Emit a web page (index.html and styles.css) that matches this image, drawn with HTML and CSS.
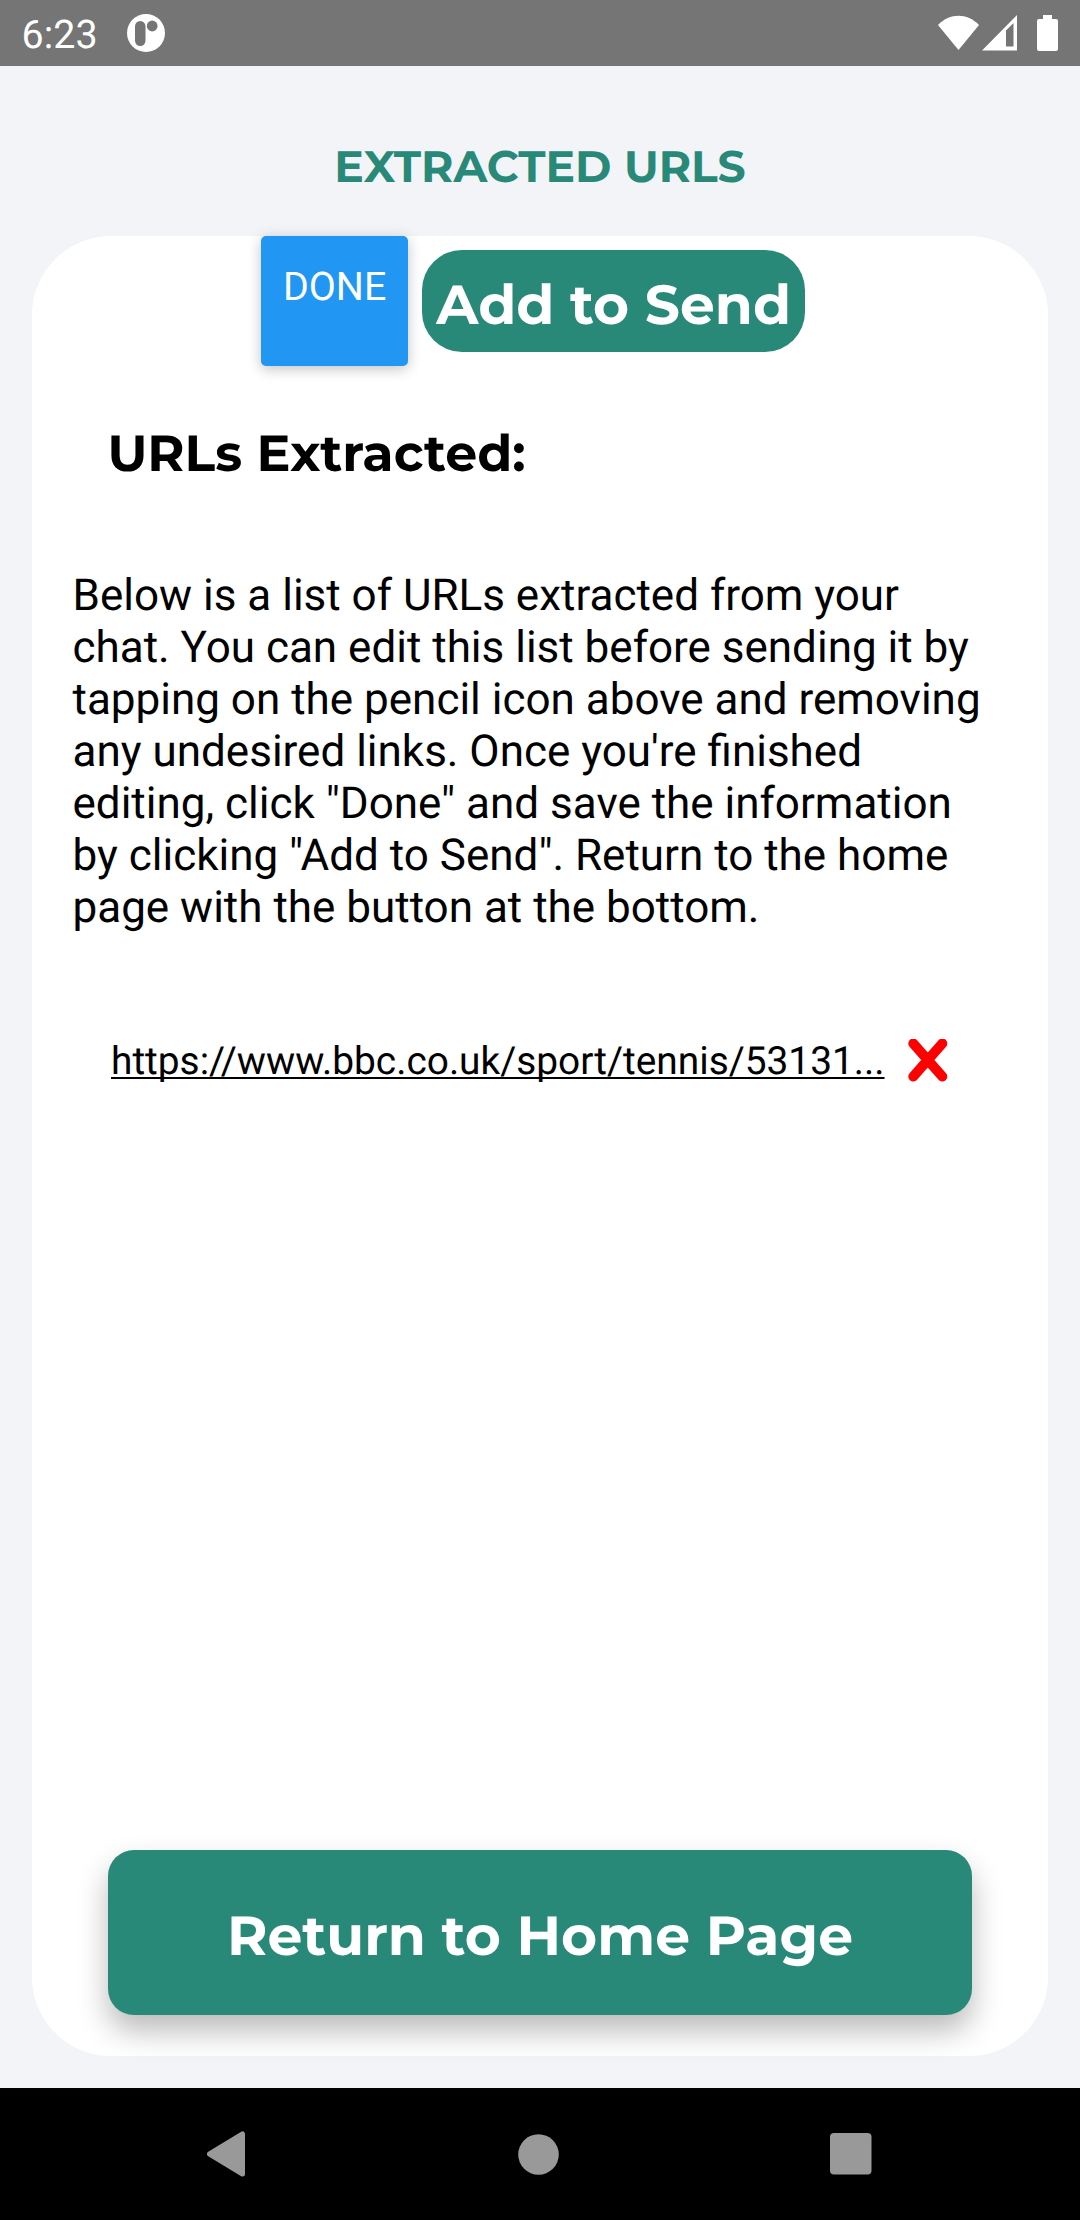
FILE: index.html
```html
<!DOCTYPE html>
<html lang="en">
<head>
<meta charset="utf-8">
<title>Extracted URLs</title>
<link rel="stylesheet" href="styles.css">
</head>
<body>
<div class="screen">
  <div class="status-bar">
    <span class="clock">6:23</span>
    <svg class="notification" width="38" height="38" viewBox="0 0 38 38">
      <circle cx="19" cy="19" r="19" fill="#fff"/>
      <rect x="8" y="7" width="10.5" height="25" rx="5.2" fill="#757575"/>
      <circle cx="25.2" cy="12" r="5.4" fill="#757575"/>
    </svg>
    <svg class="indicators" width="121" height="38" viewBox="0 0 121 38" fill="#fff">
      <path d="M0 10C12 -2.300 29 -2.300 41 10L20.500 35Z"/>
      <path fill-rule="evenodd" d="M44 35.500L79 0V35.500ZM68 15.500V31.500H75.500V8Z"/>
      <path d="M105 0H114V4H118a2 2 0 0 1 2 2V34a2 2 0 0 1-2 2H101a2 2 0 0 1-2-2V6a2 2 0 0 1 2-2H105Z"/>
    </svg>
  </div>
  <main class="page">
    <h1 class="title">EXTRACTED URLS</h1>
    <section class="card">
      <div class="actions">
        <button class="done">DONE</button>
        <button class="add">Add to Send</button>
      </div>
      <h2 class="heading">URLs Extracted:</h2>
      <p class="intro">Below is a list of URLs extracted from your<br>chat. You can edit this list before sending it by<br>tapping on the pencil icon above and removing<br>any undesired links. Once you're finished<br>editing, click "Done" and save the information<br>by clicking "Add to Send". Return to the home<br>page with the button at the bottom.</p>
      <div class="url-row">
        <a class="url">https://www.bbc.co.uk/sport/tennis/53131...</a>
        <svg class="remove" width="40" height="44" viewBox="0 0 40 44">
          <path d="M5.300 4.500L34.300 37.500M34.300 4.500L5.300 37.500" stroke="#f00" stroke-width="10" stroke-linecap="round"/>
        </svg>
      </div>
      <button class="return">Return to Home Page</button>
    </section>
  </main>
  <nav class="nav-bar">
    <svg width="40" height="46" viewBox="0 0 40 46"><path d="M3.500 23L36.500 3V43Z" fill="#999" stroke="#999" stroke-width="5" stroke-linejoin="round"/></svg>
    <svg width="41" height="41" viewBox="0 0 41 41"><circle cx="20.500" cy="20.500" r="20.300" fill="#999"/></svg>
    <svg width="42" height="42" viewBox="0 0 42 42"><rect width="41.500" height="41.500" rx="4" fill="#999"/></svg>
  </nav>
</div>
</body>
</html>
```
FILE: styles.css
```css
* { box-sizing: border-box; }

body {
  margin: 0;
  background: #f2f4f8;
  font-family: Roboto, sans-serif;
  color: #000;
  text-rendering: geometricPrecision;
}

h1, h2, p { margin: 0; }

button {
  border: 0;
  color: #fff;
  text-align: left;
  white-space: nowrap;
  text-rendering: inherit;
}

svg { display: block; flex: none; }

.screen {
  display: flex;
  flex-direction: column;
  width: 1080px;
  height: 2220px;
}

.status-bar {
  display: flex;
  height: 66px;
  padding: 0 20px 0 21.600px;
  background: #757575;
  color: #fff;
}

.clock {
  width: 105.700px;
  padding-top: 12px;
  font-size: 39.400px;
  line-height: 46px;
}

.notification { margin-top: 14.300px; }

.indicators { margin: 15px 1px 0 auto; }

.page {
  display: flex;
  flex: 1;
  flex-direction: column;
  padding: 0 32px 32px;
}

.title {
  height: 170px;
  padding-top: 74px;
  color: #298978;
  font: 700 44.100px/54px Montserrat, Inter, sans-serif;
  text-align: center;
}

.card {
  display: flex;
  flex: 1;
  flex-direction: column;
  border-radius: 79px;
  background: #fff;
}

.actions {
  display: flex;
  gap: 14px;
  height: 130px;
  margin-left: 229px;
}

.done {
  display: flex;
  width: 147px;
  padding: 27.500px 0 0 21.900px;
  border-radius: 5px;
  background: #2196f3;
  box-shadow: 0 3px 14px rgba(0, 0, 0, 0.240);
  font: 400 39.400px/46px Roboto, sans-serif;
}

.add {
  display: flex;
  width: 383px;
  height: 102px;
  margin-top: 14px;
  padding: 20.800px 0 0 14.300px;
  border-radius: 40px;
  background: #298978;
  font: 700 55.100px/67px Montserrat, Inter, sans-serif;
}

.heading {
  margin: 55.800px 0 0 75.400px;
  font: 700 50.700px/62px Montserrat, Inter, sans-serif;
}

.intro {
  margin: 85.200px 0 0 40.500px;
  font-size: 44px;
  line-height: 52px;
  white-space: nowrap;
}

.url-row {
  display: flex;
  gap: 22px;
  margin: 106px 0 0 79px;
}

.url {
  width: 775px;
  font-size: 38.850px;
  line-height: 46px;
  white-space: nowrap;
  text-decoration: underline;
  text-decoration-thickness: 2px;
  text-underline-offset: 3px;
  text-decoration-skip-ink: none;
}

.return {
  width: 864px;
  height: 165px;
  margin: auto auto 41px;
  padding: 5px 0 0;
  border-radius: 26px;
  background: #298978;
  box-shadow: 0 16px 30px rgba(0, 0, 0, 0.270);
  font: 700 55.200px/67px Montserrat, Inter, sans-serif;
  text-align: center;
}

.nav-bar {
  display: flex;
  align-items: center;
  justify-content: space-between;
  height: 132px;
  padding: 0 208px 0 206px;
  background: #000;
}
```
